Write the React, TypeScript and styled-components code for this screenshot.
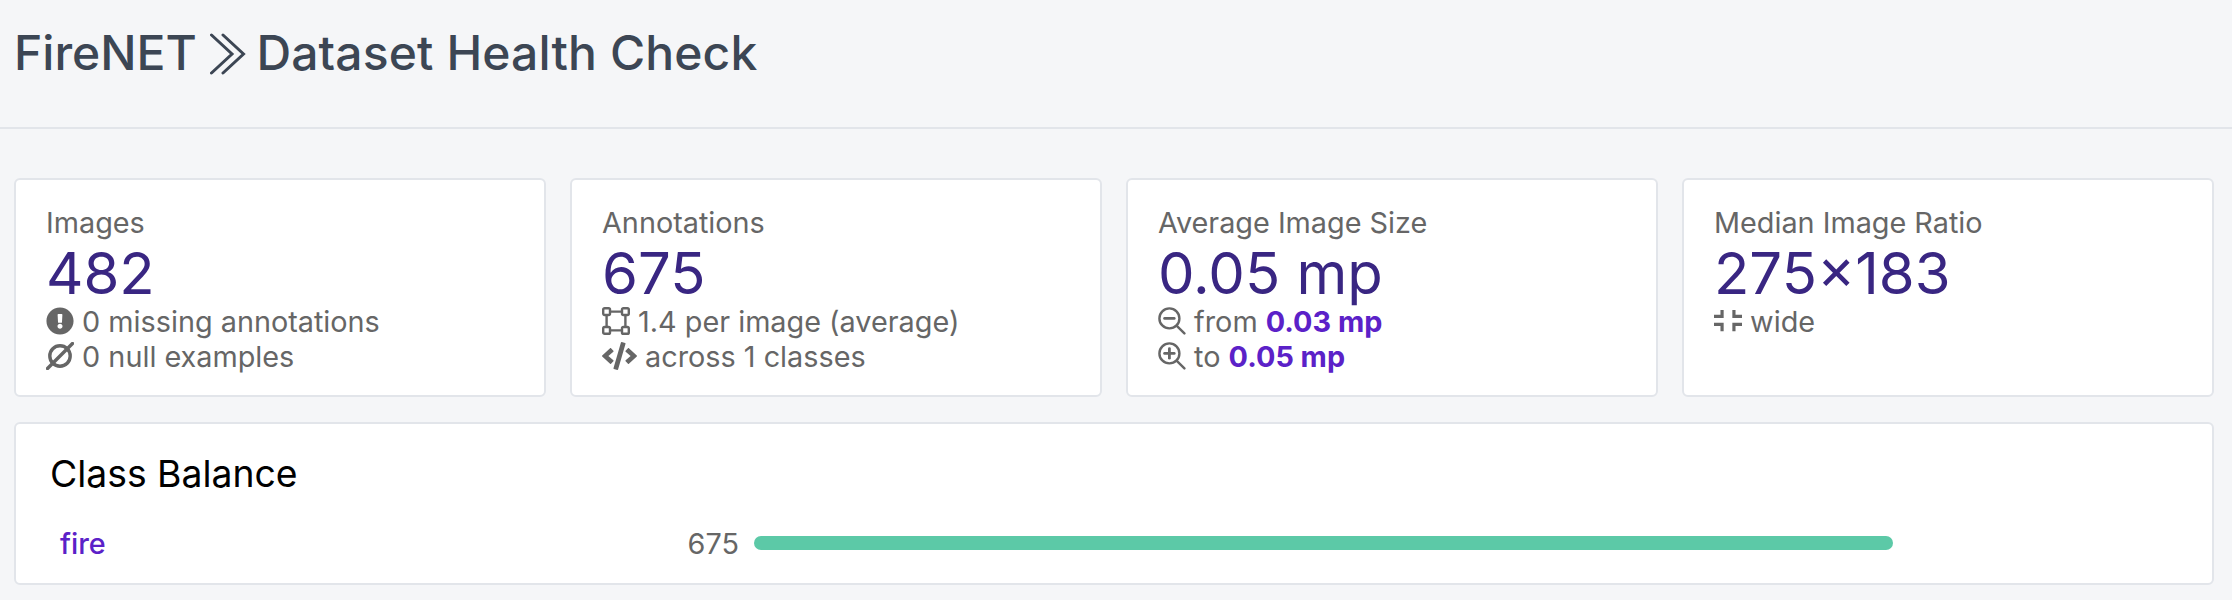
import React from 'react'
import styled, { createGlobalStyle } from 'styled-components'
import { FaCode, FaExclamationCircle } from 'react-icons/fa'

const GlobalStyle = createGlobalStyle`
  html, body {
    margin: 0;
    padding: 0;
    background: #f5f6f8;
    font-family: Inter, "Liberation Sans", sans-serif;
  }
`

// small hand drawn icons, the packages have no close match for these
const EmptySetIcon = () => (
  <Icon viewBox="0 0 28 28">
    <circle cx="14" cy="14" r="10.2" fill="none" stroke="currentColor" strokeWidth="3.4" />
    <line x1="1.5" y1="26.5" x2="26.5" y2="1.5" stroke="currentColor" strokeWidth="3.4" strokeLinecap="round" />
  </Icon>
)

const VectorSquareIcon = () => (
  <Icon viewBox="0 0 28 28" fill="none" stroke="currentColor" strokeWidth="2.4">
    <rect x="1.2" y="1.2" width="6.8" height="6.8" rx="1.4" />
    <rect x="20" y="1.2" width="6.8" height="6.8" rx="1.4" />
    <rect x="1.2" y="20" width="6.8" height="6.8" rx="1.4" />
    <rect x="20" y="20" width="6.8" height="6.8" rx="1.4" />
    <path d="M8 4.6h12M8 23.4h12M4.6 8v12M23.4 8v12" />
  </Icon>
)

const ZoomIcon = ({ plus }: { plus?: boolean }) => (
  <Icon viewBox="0 0 28 28" fill="none" stroke="currentColor" strokeWidth="2.4" strokeLinecap="round">
    <circle cx="11.4" cy="11.4" r="10" />
    <line x1="18.8" y1="18.8" x2="26.4" y2="26.4" />
    <line x1="6.6" y1="11.4" x2="16.2" y2="11.4" strokeWidth="2.8" />
    {plus && <line x1="11.4" y1="6.6" x2="11.4" y2="16.2" strokeWidth="2.8" />}
  </Icon>
)

const CompressIcon = () => (
  <Icon viewBox="0 0 29 28" fill="currentColor">
    <path d="M6.7 2.5H10v8.3H0V7.5h6.7zM19 2.5h3.3v5H29v3.3H19zM0 15.8h10v8.7H6.7v-5.4H0zM19 15.8h10v3.3h-6.7v5.4H19z" />
  </Icon>
)

const ChevronsIcon = () => (
  <Chevrons viewBox="0 0 36 42" fill="none" stroke="currentColor" strokeWidth="3" strokeLinecap="round">
    <path d="M1.5 2 L22 21 L1.5 40" />
    <path d="M13 2 L33.5 21 L13 40" />
  </Chevrons>
)

export default function App() {
  return (
    <Page>
      <GlobalStyle />
      <Header>
        <Title>
          FireNET <ChevronsIcon /> <TitleEnd>Dataset Health Check</TitleEnd>
        </Title>
      </Header>
      <Main>
        <Cards>
          <Card>
            <Label>Images</Label>
            <Value>482</Value>
            <Detail>
              <AlertGlyph /> 0 missing annotations
            </Detail>
            <Detail>
              <EmptySetIcon /> 0 null examples
            </Detail>
          </Card>
          <Card>
            <Label>Annotations</Label>
            <Value>675</Value>
            <Detail>
              <VectorSquareIcon /> 1.4 per image (average)
            </Detail>
            <Detail>
              <CodeGlyph /> across 1 classes
            </Detail>
          </Card>
          <Card>
            <Label>Average Image Size</Label>
            <Value>0.05 mp</Value>
            <Detail>
              <ZoomIcon /> from <Strong>0.03 mp</Strong>
            </Detail>
            <Detail>
              <ZoomIcon plus /> to <Strong>0.05 mp</Strong>
            </Detail>
          </Card>
          <Card>
            <Label>Median Image Ratio</Label>
            <Value>275×183</Value>
            <Detail>
              <CompressIcon /> wide
            </Detail>
          </Card>
        </Cards>
        <Panel>
          <PanelTitle>Class Balance</PanelTitle>
          <BalanceRow>
            <ClassName>fire</ClassName>
            <Count>675</Count>
            <Track>
              <Bar $width={80} />
            </Track>
          </BalanceRow>
        </Panel>
      </Main>
    </Page>
  )
}

const Page = styled.div`
  width: 2232px;
  height: 600px;
  overflow: hidden;
  color: #666;
`

const Header = styled.header`
  height: 103px;
  padding: 24px 0 0 14px;
  border-bottom: 2px solid #e2e5ea;
`

const Title = styled.h1`
  margin: 0;
  font-size: 48px;
  line-height: 58px;
  font-weight: 500;
  color: #3c4654;
`

const TitleEnd = styled.span`
  letter-spacing: 0.14px;
`

const Chevrons = styled.svg`
  width: 36px;
  height: 42px;
  margin-right: -2px;
  vertical-align: -5px;
`

const Main = styled.main`
  padding: 49px 18px 0 14px;
  display: flex;
  flex-direction: column;
  gap: 25px;
`

const Cards = styled.div`
  display: grid;
  grid-template-columns: repeat(4, 1fr);
  gap: 24px;
`

const Card = styled.section`
  box-sizing: border-box;
  height: 219px;
  padding: 25px 30px;
  background: #fff;
  border: 2px solid #e2e5ea;
  border-radius: 6px;
`

const Label = styled.div`
  margin-bottom: 2px;
  font-size: 28.8px;
  line-height: 35px;
`

const Value = styled.div`
  font-size: 58px;
  line-height: 62px;
  color: #392682;
`

const Detail = styled.div`
  font-size: 28.8px;
  line-height: 35px;
  white-space: nowrap;
`

const Icon = styled.svg`
  width: 28px;
  height: 28px;
  vertical-align: -0.12em;
`

const AlertGlyph = styled(FaExclamationCircle)`
  width: 28px;
  height: 28px;
  vertical-align: -0.12em;
`

const CodeGlyph = styled(FaCode)`
  width: 35px;
  height: 28px;
  vertical-align: -0.12em;
`

const Strong = styled.strong`
  font-weight: 700;
  color: #5b21c8;
`

const Panel = styled.section`
  box-sizing: border-box;
  height: 163px;
  padding: 28px 34px;
  background: #fff;
  border: 2px solid #e2e5ea;
  border-radius: 6px;
`

const PanelTitle = styled.h2`
  margin: 0 0 29px;
  font-size: 37.3px;
  line-height: 44px;
  font-weight: 400;
  color: #000;
`

const BalanceRow = styled.div`
  display: grid;
  grid-template-columns: 689px 1fr;
  grid-template-areas: 'label track';
  column-gap: 15px;
  align-items: center;
`

const ClassName = styled.span`
  grid-area: label;
  padding: 2px 0 0 10px;
  font-size: 28.8px;
  line-height: 34px;
  font-weight: 500;
  color: #5b21c8;
`

const Count = styled.span`
  grid-area: label;
  justify-self: end;
  padding-top: 2px;
  font-size: 28.8px;
  line-height: 34px;
`

const Track = styled.div`
  grid-area: track;
`

const Bar = styled.div<{ $width: number }>`
  width: ${(p) => p.$width}%;
  height: 14px;
  border-radius: 7px;
  background: #5cc9a7;
`
